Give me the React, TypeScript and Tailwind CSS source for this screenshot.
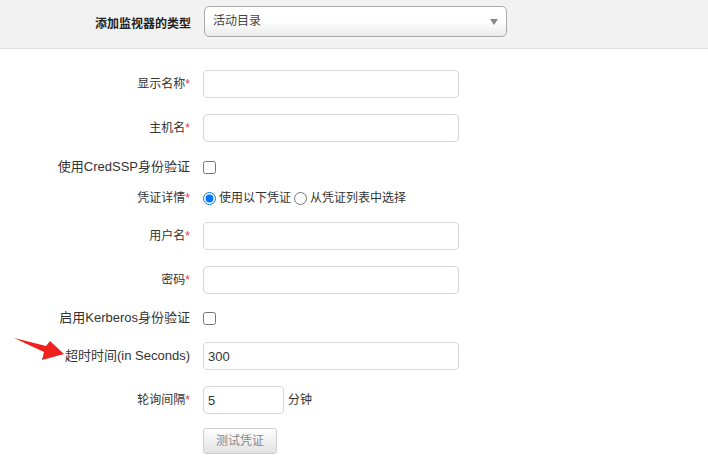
const font = { fontFamily: '"Liberation Sans", Arial, "Noto Sans CJK SC", sans-serif' };

function Req() {
  return <span className="text-[#e8383d]">*</span>;
}

function Label({ children, req }: { children: React.ReactNode; req?: boolean }) {
  return (
    <div className={`w-[191px] shrink-0 text-right text-[#333] pr-[1px] ${req ? "text-[12px]" : "text-[13px]"}`}>
      {children}
      {req && <Req />}
    </div>
  );
}

function TextInput({ value = "", w = "w-[256px]" }: { value?: string; w?: string }) {
  return (
    <input
      defaultValue={value}
      className={`${w} h-[28px] rounded-[4px] border border-[#d6d6d6] bg-white px-[4px] text-[13px] text-[#333] outline-none`}
    />
  );
}

export default function App() {
  return (
    <div className="relative w-[708px] h-[457px] bg-white overflow-hidden" style={font}>
      {/* top bar */}
      <div className="flex h-[49px] items-start border-b border-[#dcdcdc] bg-[#f2f2f2]">
        <div className="w-[191px] pt-[15px] text-right text-[12px] font-bold text-[#222]">添加监视器的类型</div>
        <div className="ml-[13px] mt-[6px] flex h-[31px] w-[303px] items-start justify-between rounded-[5px] border border-[#aaa] bg-gradient-to-b from-white from-50% to-[#eaeaea] pl-[8px] pr-[8px]">
          <span className="pt-[5px] text-[12px] text-[#444]">活动目录</span>
          <span className="mt-[12px] h-0 w-0 border-x-[4px] border-t-[6px] border-x-transparent border-t-[#888]" />
        </div>
      </div>

      <div className="flex flex-col pt-[21px]">
        <div className="flex h-[28px] items-center gap-[12px]">
          <Label req>显示名称</Label>
          <TextInput />
        </div>
        <div className="mt-[16px] flex h-[28px] items-center gap-[12px]">
          <Label req>主机名</Label>
          <TextInput />
        </div>
        <div className="mt-[15px] flex h-[20px] items-center gap-[12px]">
          <Label>使用CredSSP身份验证</Label>
          <input type="checkbox" className="m-0 h-[13px] w-[13px]" />
        </div>
        <div className="mt-[11px] flex h-[20px] items-center gap-[12px]">
          <Label req>凭证详情</Label>
          <div className="flex items-center text-[12px] text-[#333]">
            <input type="radio" name="cred" defaultChecked className="m-0 h-[13px] w-[13px]" />
            <span className="ml-[3px]">使用以下凭证</span>
            <input type="radio" name="cred" className="ml-[3px] h-[13px] w-[13px]" />
            <span className="ml-[3px]">从凭证列表中选择</span>
          </div>
        </div>
        <div className="mt-[14px] flex h-[28px] items-center gap-[12px]">
          <Label req>用户名</Label>
          <TextInput />
        </div>
        <div className="mt-[16px] flex h-[28px] items-center gap-[12px]">
          <Label req>密码</Label>
          <TextInput />
        </div>
        <div className="mt-[14px] flex h-[20px] items-center gap-[12px]">
          <Label>启用Kerberos身份验证</Label>
          <input type="checkbox" className="m-0 h-[13px] w-[13px]" />
        </div>
        <div className="mt-[14px] flex h-[28px] items-center gap-[12px]">
          <Label>超时时间(in Seconds)</Label>
          <TextInput value="300" />
        </div>
        <div className="mt-[16px] flex h-[28px] items-center gap-[12px]">
          <Label req>轮询间隔</Label>
          <div className="flex items-center gap-[4px]">
            <TextInput value="5" w="w-[81px]" />
            <span className="text-[12px] text-[#333]">分钟</span>
          </div>
        </div>
        <div className="mt-[14px] flex items-center gap-[12px]">
          <div className="w-[191px] shrink-0" />
          <button className="h-[26px] w-[74px] rounded-[3px] border border-[#ccc] bg-gradient-to-b from-white to-[#e2e2e2] text-[12px] text-[#888]">
            测试凭证
          </button>
        </div>
      </div>

      {/* annotation arrow */}
      <svg className="absolute left-0 top-[330px]" width="70" height="40" viewBox="0 0 70 40">
        <polygon points="14,8 46,16 50,11 64,24 42,30 44,22" fill="#f0201c" />
      </svg>
    </div>
  );
}
